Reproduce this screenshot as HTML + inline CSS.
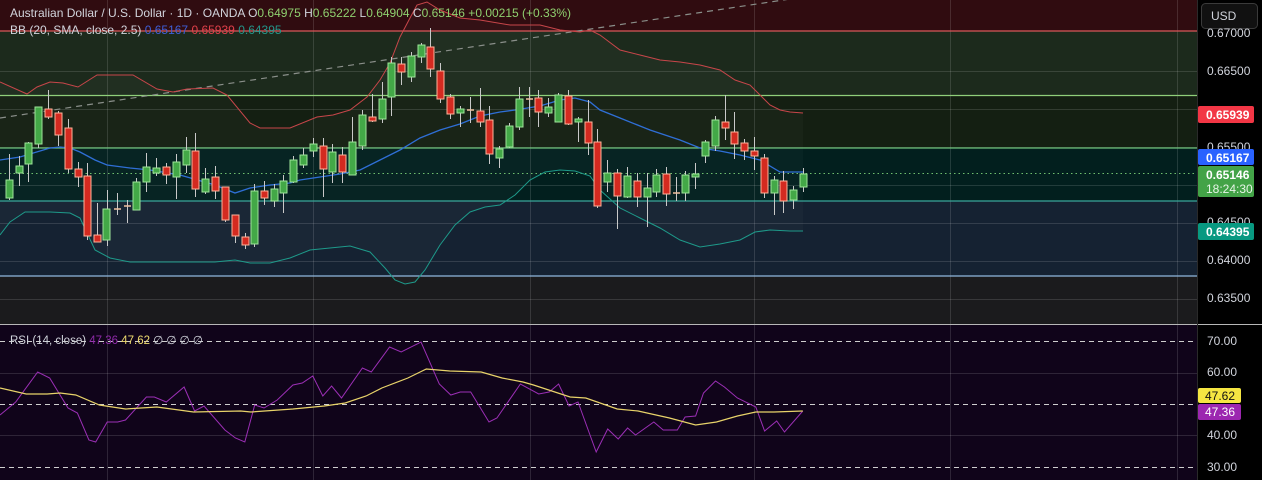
<!DOCTYPE html>
<html><head><meta charset="utf-8"><style>
html,body{margin:0;padding:0;background:#000;width:1262px;height:480px;overflow:hidden;font-family:"Liberation Sans",sans-serif}
svg{display:block}
text{font-family:"Liberation Sans",sans-serif}
</style></head><body>
<svg width="1262" height="480" viewBox="0 0 1262 480" xmlns="http://www.w3.org/2000/svg">
<rect x="0" y="0" width="1197" height="31" fill="#300c10"/>
<rect x="0" y="31" width="1197" height="64" fill="#1c2a1c"/>
<rect x="0" y="95" width="1197" height="53" fill="#141f12"/>
<rect x="0" y="148" width="1197" height="53" fill="#021f1e"/>
<rect x="0" y="201" width="1197" height="75" fill="#152232"/>
<rect x="0" y="276" width="1197" height="48" fill="#1b1b1d"/>
<rect x="1197" y="0" width="65" height="480" fill="#000"/>
<rect x="0" y="325" width="1197" height="155" fill="#10041a"/>
<!-- BB fill -->
<path d="M0 82L27 94L37 87L50 82L63 83L78 87L97 75L133 75L157 89L173 92L187 89L213 88L227 95L250 123L260 128L290 128L317 117L333 115L350 110L367 97L380 80L390 63L400 37L410 18L417 5L427 2L440 10L460 18L480 20L510 25L540 25L560 30L580 32L590 30L600 35L620 50L640 55L660 60L680 62L700 65L720 70L735 80L750 85L760 95L770 105L780 110L790 112L803 113L803 231L790 231L770 230L755 232L740 240L720 244L700 247L680 240L660 228L640 218L620 208L600 190L590 176L575 171L560 170L545 172L530 180L515 195L500 205L485 207L470 212L455 225L440 245L425 270L415 282L405 284L395 280L385 268L370 252L350 246L330 248L310 250L290 258L270 263L250 263L235 260L215 262L130 262L110 258L95 250L80 218L70 213L50 212L25 212L10 222L0 235Z" fill="rgba(255,255,255,0.025)"/>
<g stroke="rgba(255,255,255,0.13)" stroke-width="1">
<path d="M0 71.5H1197M0 109.5H1197M0 147.5H1197M0 185.5H1197M0 223.5H1197M0 261.5H1197M0 299.5H1197"/>
<path d="M107.5 0V480M313.5 0V480M530.5 0V480M754.5 0V480M950.5 0V480M1177.5 0V480"/>
<path d="M0 373.5H1197M0 435.5H1197"/>
</g>
<path d="M0 31H1197" stroke="#d9575a" stroke-width="1.3"/>
<path d="M0 95.5H1197" stroke="#8fcf7a" stroke-width="1.2"/>
<path d="M0 148H1197" stroke="#6cc07a" stroke-width="1.2"/>
<path d="M0 201H1197" stroke="#3aa69a" stroke-width="1.2"/>
<path d="M0 276H1197" stroke="#90b8e0" stroke-width="1.2"/>
<path d="M0 173.5H1197" stroke="#6fbf6f" stroke-width="1" stroke-dasharray="1.5 3"/>
<path d="M0 118L790 -1" stroke="#8a8f8a" stroke-width="1.2" stroke-dasharray="6 5"/>
<polyline points="0,82 27,94 37,87 50,82 63,83 78,87 97,75 133,75 157,89 173,92 187,89 213,88 227,95 250,123 260,128 290,128 317,117 333,115 350,110 367,97 380,80 390,63 400,37 410,18 417,5 427,2 440,10 460,18 480,20 510,25 540,25 560,30 580,32 590,30 600,35 620,50 640,55 660,60 680,62 700,65 720,70 735,80 750,85 760,95 770,105 780,110 790,112 803,113" fill="none" stroke="#c8464a" stroke-width="1"/>
<polyline points="0,160 20,157 50,148 60,147 70,148 80,152 95,160 107,165 130,168 150,170 180,175 215,185 235,193 250,188 270,185 290,183 300,180 320,177 340,174 360,170 380,160 400,150 420,138 440,130 460,124 480,116 500,112 515,110 540,106 560,100 575,98 590,102 600,110 620,118 650,130 680,140 700,148 720,151 740,155 760,160 780,172 803,172" fill="none" stroke="#2f6fd6" stroke-width="1.3"/>
<polyline points="0,235 10,222 25,212 50,212 70,213 80,218 95,250 110,258 130,262 215,262 235,260 250,263 270,263 290,258 310,250 330,248 350,246 370,252 385,268 395,280 405,284 415,282 425,270 440,245 455,225 470,212 485,207 500,205 515,195 530,180 545,172 560,170 575,171 590,176 600,190 620,208 640,218 660,228 680,240 700,247 720,244 740,240 755,232 770,230 790,231 803,231" fill="none" stroke="#1e9a8a" stroke-width="1"/>
<path stroke="#c9c9c9" stroke-width="1" d="M9.5 154V200M19.5 156V186M28.5 142V182M38.5 107V148M48.5 90V119M58.5 111V146M68.5 119V173M78.5 162V187M87.5 163V240M97.5 203V242M107.5 190V246M117.5 193V215M127.5 200V223M136.5 178V210M146.5 153V192M156.5 158V176M166.5 163V184M176.5 154V199M186.5 137V173M195.5 133V197M205.5 168V194M215.5 166V199M225.5 187V222M235.5 215V243M245.5 233V249M254.5 184V247M264.5 181V205M274.5 184V207M283.5 175V213M293.5 156V183M303.5 148V168M313.5 138V157M323.5 138V197M332.5 144V183M342.5 147V183M352.5 117V175M362.5 110V150M372.5 94V122M382.5 82V123M391.5 57V116M401.5 57V85M411.5 52V82M421.5 43V63M430.5 28V77M440.5 63V103M450.5 94V119M460.5 106V127M470.5 97V123M480.5 88V127M489.5 106V164M499.5 146V168M509.5 123V148M519.5 87V130M529.5 87V117M538.5 90V127M548.5 98V117M558.5 93V122M568.5 90V125M578.5 117V142M588.5 100V155M597.5 129V208M607.5 160V192M617.5 169V229M627.5 167V198M637.5 173V207M647.5 173V227M656.5 169V197M666.5 167V206M676.5 177V201M685.5 171V201M695.5 163V189M705.5 140V163M715.5 116V151M725.5 95V140M734.5 112V159M744.5 139V160M754.5 137V170M764.5 154V198M774.5 176V215M783.5 171V213M793.5 186V209M803.5 168V192"/>
<g fill="#43a847" stroke="#9ee59a" stroke-width="1">
<rect x="6" y="180" width="7" height="18"/><rect x="16" y="166" width="7" height="7"/><rect x="25" y="143" width="7" height="21"/><rect x="35" y="107" width="7" height="37"/>
<rect x="103" y="209" width="7" height="31"/><rect x="133" y="182" width="7" height="28"/><rect x="143" y="167" width="7" height="15"/><rect x="153" y="168" width="7" height="5"/>
<rect x="173" y="162" width="7" height="15"/><rect x="183" y="150" width="7" height="15"/><rect x="202" y="179" width="7" height="13"/><rect x="251" y="191" width="7" height="53"/>
<rect x="271" y="189" width="7" height="12"/><rect x="280" y="181" width="7" height="12"/><rect x="290" y="160" width="7" height="22"/><rect x="300" y="155" width="7" height="10"/>
<rect x="310" y="144" width="7" height="7"/><rect x="329" y="152" width="7" height="20"/><rect x="349" y="142" width="7" height="33"/><rect x="359" y="115" width="7" height="31"/>
<rect x="379" y="99" width="7" height="20"/><rect x="388" y="63" width="7" height="34"/><rect x="408" y="56" width="7" height="21"/><rect x="418" y="45" width="7" height="12"/>
<rect x="457" y="109" width="7" height="4"/><rect x="496" y="149" width="7" height="9"/><rect x="506" y="126" width="7" height="21"/><rect x="516" y="99" width="7" height="28"/>
<rect x="545" y="107" width="7" height="6"/><rect x="555" y="95" width="7" height="27"/><rect x="575" y="119" width="7" height="3"/><rect x="604" y="173" width="7" height="9"/>
<rect x="624" y="176" width="7" height="21"/><rect x="644" y="188" width="7" height="9"/><rect x="653" y="175" width="7" height="17"/><rect x="682" y="175" width="7" height="18"/>
<rect x="692" y="174" width="7" height="3"/><rect x="702" y="142" width="7" height="14"/><rect x="712" y="120" width="7" height="26"/><rect x="771" y="180" width="7" height="13"/>
<rect x="790" y="190" width="7" height="10"/><rect x="800" y="174" width="7" height="13"/>
</g>
<g fill="#d42a20" stroke="#ffb39a" stroke-width="1">
<rect x="45" y="109" width="7" height="8"/><rect x="55" y="113" width="7" height="22"/><rect x="65" y="128" width="7" height="41"/><rect x="75" y="169" width="7" height="8"/>
<rect x="84" y="176" width="7" height="60"/><rect x="94" y="235" width="7" height="7"/><rect x="163" y="167" width="7" height="8"/><rect x="192" y="151" width="7" height="38"/>
<rect x="212" y="177" width="7" height="14"/><rect x="222" y="187" width="7" height="33"/><rect x="232" y="215" width="7" height="21"/><rect x="242" y="237" width="7" height="8"/>
<rect x="261" y="191" width="7" height="7"/><rect x="320" y="146" width="7" height="23"/><rect x="339" y="155" width="7" height="17"/><rect x="369" y="117" width="7" height="4"/>
<rect x="398" y="64" width="7" height="8"/><rect x="427" y="47" width="7" height="22"/><rect x="437" y="71" width="7" height="28"/><rect x="447" y="97" width="7" height="17"/>
<rect x="477" y="111" width="7" height="11"/><rect x="486" y="120" width="7" height="34"/><rect x="535" y="98" width="7" height="14"/><rect x="565" y="96" width="7" height="28"/>
<rect x="585" y="122" width="7" height="21"/><rect x="594" y="142" width="7" height="64"/><rect x="614" y="173" width="7" height="23"/><rect x="634" y="181" width="7" height="16"/>
<rect x="663" y="174" width="7" height="20"/><rect x="722" y="122" width="7" height="6"/><rect x="731" y="132" width="7" height="12"/><rect x="741" y="143" width="7" height="8"/>
<rect x="751" y="151" width="7" height="5"/><rect x="761" y="158" width="7" height="35"/><rect x="780" y="181" width="7" height="20"/>
</g>
<path stroke="#f0c0a0" stroke-width="1.5" d="M114 209H121M124 206H131M467 110H474M526 99H533M673 193H680"/>
<path d="M0 324.5H1262" stroke="#b8b8b8" stroke-width="1"/>
<path d="M1197.5 0V480" stroke="#2a2a2a" stroke-width="1"/>
<g stroke="#cfcfcf" stroke-width="1" stroke-dasharray="5 4">
<path d="M0 341.5H1197M0 404.5H1197M0 467.5H1197"/>
</g>
<polyline fill="none" stroke="#9b2fb5" stroke-width="1" points="0,415 15.7,402 37.7,372 49.7,378 68,408 77.4,413 88.9,440 95.7,442 107.2,422 117.7,422 125.5,420 146.4,397 154.3,397 166.3,402 184.1,387 194.6,411 204,406 224.9,430 235.4,438 244.8,442 254.7,405 264.1,408 277.2,400 292.9,385 302.3,383 312.8,376 322.8,396 331.6,386 341.5,398 362.4,368 371.3,372 389.6,347 401.2,352 421,342 439.3,384 450.8,395 460.3,392 470.7,392 489,422 496.9,418 520.4,384 538.7,394 549.2,392 558.6,384 569.1,406 578,402 596.2,452 607.7,429 618.2,439 627.6,428 635.5,435 653.8,422 663.2,430 677.3,430 685.1,417 695.6,416 703.5,393 715.5,381 724.4,387 737.4,398 755.8,407 764.6,431 776.7,421 784.5,432 802.8,411"/>
<polyline fill="none" stroke="#e8d36a" stroke-width="1.2" points="0,388 26.2,394 47.1,394 60.1,393 75.8,395 99.4,405 125.5,409 156.9,407 193.5,412 240.6,411 251,412 292.9,409 324.3,406 345.2,403 366.1,396 381.8,388 407.9,378 426.3,369 449.8,371 481.2,372 502.1,378 523,382 533.5,385 570.1,397 585.8,398 617.2,409 638.1,411 669.5,418 695.6,425 716.5,422 737.4,416 755.8,412 774.1,412 802.8,411"/>
<g font-size="12" fill="#d1d4dc">
<text x="10" y="17">Australian Dollar / U.S. Dollar · 1D · OANDA  O<tspan fill="#8fd06f">0.64975</tspan>  H<tspan fill="#8fd06f">0.65222</tspan>  L<tspan fill="#8fd06f">0.64904</tspan>  C<tspan fill="#8fd06f">0.65146 +0.00215 (+0.33%)</tspan></text>
<text x="10" y="34">BB (20, SMA, close, 2.5) <tspan fill="#3f5fd8">0.65167</tspan> <tspan fill="#e0404a">0.65939</tspan> <tspan fill="#23968a">0.64395</tspan></text>
<text x="10" y="344" font-size="11.5">RSI (14, close) <tspan fill="#8e2aa8">47.36</tspan> <tspan fill="#f0dc70">47.62</tspan> <tspan>∅ ∅ ∅ ∅</tspan></text>
</g>
<rect x="1201.5" y="3.5" width="56" height="25" rx="4" fill="#111" stroke="#3a3a3a"/>
<text x="1211" y="20" font-size="12" fill="#d1d4dc">USD</text>
<g font-size="12" fill="#d1d4dc">
<text x="1207" y="37">0.67000</text>
<text x="1207" y="75">0.66500</text>
<text x="1207" y="151">0.65500</text>
<text x="1207" y="226">0.64500</text>
<text x="1207" y="264">0.64000</text>
<text x="1207" y="302">0.63500</text>
<text x="1207" y="345">70.00</text>
<text x="1207" y="376">60.00</text>
<text x="1207" y="439">40.00</text>
<text x="1207" y="471">30.00</text>
</g>
<rect x="1198" y="106" width="56" height="17" rx="2" fill="#f23645"/>
<text x="1206" y="119" font-size="12" fill="#fff" font-weight="bold">0.65939</text>
<rect x="1198" y="149" width="56" height="16" rx="2" fill="#2962ff"/>
<text x="1206" y="162" font-size="12" fill="#fff" font-weight="bold">0.65167</text>
<rect x="1198" y="166" width="56" height="31" rx="2" fill="#43a347"/>
<text x="1206" y="179" font-size="12" fill="#fff" font-weight="bold">0.65146</text>
<text x="1206" y="193" font-size="12" fill="#e8f5e8">18:24:30</text>
<rect x="1198" y="223" width="56" height="17" rx="2" fill="#089981"/>
<text x="1206" y="236" font-size="12" fill="#fff" font-weight="bold">0.64395</text>
<rect x="1198" y="388" width="43" height="15" rx="2" fill="#f5e642"/>
<text x="1205" y="400" font-size="12" fill="#111">47.62</text>
<rect x="1198" y="404" width="43" height="16" rx="2" fill="#9c27b0"/>
<text x="1205" y="416" font-size="12" fill="#fff">47.36</text>
</svg>
</body></html>
